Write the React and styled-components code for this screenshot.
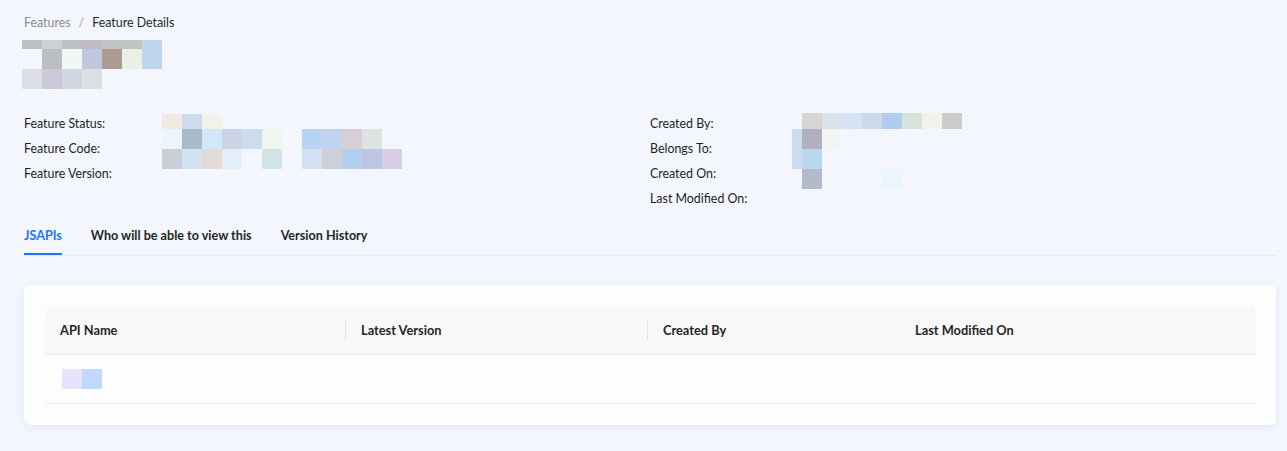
import React from 'react';
import styled, { createGlobalStyle } from 'styled-components';

const GlobalStyle = createGlobalStyle`
  body {
    margin: 0;
    background: #f3f6fd;
    font-family: Lato, "Noto Sans", Arial, sans-serif;
    color: #262626;
  }
`;

const Page = styled.div`
  padding: 13px 11px 24px 24px;
  min-height: 100vh;
  box-sizing: border-box;
`;

const Breadcrumb = styled.div`
  display: flex;
  align-items: center;
  gap: 8px;
  font-size: 12.4px;
  line-height: 20px;
`;

const Crumb = styled.span`
  color: ${p => (p.current ? '#262626' : '#8c8c8c')};
`;

const Sep = styled.span`
  color: #a6a6a6;
`;

const TitleMosaic = styled.svg`
  display: block;
  margin: 7px 0 0 -2px;
`;

const Info = styled.div`
  position: relative;
  display: grid;
  grid-template-columns: 626px 1fr;
  margin-top: 22px;
`;

const Column = styled.div`
  display: grid;
  grid-template-columns: ${p => p.labelWidth}px 1fr;
  grid-auto-rows: 25px;
  align-items: center;
  font-size: 12.4px;
`;

const Label = styled.div`
  color: #1f1f1f;
`;

const Value = styled.div``;

const Redaction = styled.svg`
  position: absolute;
  left: 0;
  top: 0;
  pointer-events: none;
`;

const Tabs = styled.div`
  display: flex;
  gap: 29px;
  border-bottom: 1px solid #e8eaef;
`;

const Tab = styled.div`
  position: relative;
  padding: 15px 0 9px;
  font-size: 12.6px;
  line-height: 20px;
  font-weight: 700;
  color: ${p => (p.active ? '#1677ff' : '#262626')};

  &::after {
    content: '';
    position: absolute;
    left: 0;
    right: 0;
    bottom: 0;
    height: 2px;
    background: ${p => (p.active ? '#1677ff' : 'transparent')};
  }
`;

const Card = styled.div`
  margin-top: 29px;
  background: #fdfdfd;
  border-radius: 6px;
  padding: 21px;
  box-shadow: 0 2px 8px rgba(40, 60, 120, 0.08);
`;

const Table = styled.div`
  display: grid;
  grid-template-columns: 300px 302px 252px 1fr;
`;

const HeadCell = styled.div`
  position: relative;
  height: 48px;
  display: flex;
  align-items: center;
  padding: 0 15px 0 16px;
  background: #f8f8f8;
  border-bottom: 1px solid #ebebeb;
  font-size: 12.8px;
  font-weight: 700;
  color: #262626;
  &:first-child { border-top-left-radius: 8px; padding-left: 15px; }
  &:last-child { border-top-right-radius: 8px; }

  &::before {
    content: '';
    display: ${p => (p.divider ? 'block' : 'none')};
    position: absolute;
    left: 0;
    top: 14px;
    bottom: 14px;
    width: 1px;
    background: #e6e6e6;
  }
`;

const BodyCell = styled.div`
  height: 48px;
  display: flex;
  align-items: center;
  padding: 0 16px;
  border-bottom: 1px solid #ebebeb;
`;

const NameMosaic = styled.svg`
  display: block;
  margin-left: 1px;
`;

const titleCells = [
  [0, 0, 20, 9, '#bdbfc2'], [20, 0, 20, 9, '#cdd0d6'], [40, 0, 20, 9, '#bec0c3'],
  [60, 0, 20, 9, '#c0bcc1'], [80, 0, 20, 9, '#c0c2c5'], [100, 0, 20, 9, '#c0c3c0'],
  [120, 0, 20, 29, '#bed5ec'],
  [20, 9, 20, 20, '#bcbfc2'], [40, 9, 20, 20, '#f2f6f6'], [60, 9, 20, 20, '#bfc8e0'],
  [80, 9, 20, 20, '#ad9b90'], [100, 9, 20, 20, '#e9f0e5'],
  [0, 29, 20, 20, '#dcdfe5'], [20, 29, 20, 20, '#cdc9d8'], [40, 29, 20, 20, '#cfd8e1'],
  [60, 29, 20, 20, '#dcdfe3'],
];

// page coordinates of the blurred values; shifted to the info block origin below
const infoCells = [
  [162, 114, 20, 15, '#f3e9e3'], [182, 114, 20, 15, '#ccdcec'], [202, 114, 20, 15, '#f4f1ea'],
  [162, 129, 20, 20, '#eaf6fc'], [182, 129, 20, 20, '#aabacb'], [202, 129, 20, 20, '#d0e8f9'],
  [222, 129, 20, 20, '#cbd5e6'], [242, 129, 20, 20, '#ccdcec'], [262, 129, 20, 20, '#eef6ef'],
  [302, 129, 20, 20, '#b8d4f4'], [322, 129, 20, 20, '#c0d4f2'], [342, 129, 20, 20, '#d8ced6'],
  [362, 129, 20, 20, '#dce4e2'],
  [162, 149, 20, 20, '#cbcdda'], [182, 149, 20, 20, '#d2e2f3'], [202, 149, 20, 20, '#e2d9d8'],
  [222, 149, 20, 20, '#e2effb'], [262, 149, 20, 20, '#d4e3e6'],
  [302, 149, 20, 20, '#d2e2f3'], [322, 149, 20, 20, '#cdd0d6'], [342, 149, 20, 20, '#b2cfee'],
  [362, 149, 20, 20, '#bdc6e2'], [382, 149, 20, 20, '#d8cfe4'],
  [802, 113, 20, 16, '#d4d6d6'], [822, 113, 20, 16, '#d7e3e8'], [842, 113, 20, 16, '#d4e2f4'],
  [862, 113, 20, 16, '#cbd9ea'], [882, 113, 20, 16, '#b0cdee'], [902, 113, 20, 16, '#d5e5dd'],
  [922, 113, 20, 16, '#f3f1eb'], [942, 113, 20, 16, '#cbcccc'],
  [792, 129, 10, 40, '#ccdcee'],
  [802, 129, 20, 20, '#b3afc2'], [822, 129, 20, 20, '#f2f5f3'],
  [802, 149, 20, 20, '#b8d8f0'],
  [802, 169, 20, 20, '#b3bacb'], [882, 169, 20, 20, '#eaf6fc'],
];

const left = ['Feature Status:', 'Feature Code:', 'Feature Version:'];
const right = ['Created By:', 'Belongs To:', 'Created On:', 'Last Modified On:'];
const columns = [
  { title: 'API Name' },
  { title: 'Latest Version', divider: true },
  { title: 'Created By', divider: true },
  { title: 'Last Modified On' },
];

export default function App() {
  return (
    <Page>
      <GlobalStyle />
      <Breadcrumb>
        <Crumb>Features</Crumb>
        <Sep>/</Sep>
        <Crumb current>Feature Details</Crumb>
      </Breadcrumb>

      <TitleMosaic width="140" height="49">
        {titleCells.map(([x, y, w, h, c], i) => (
          <rect key={i} x={x} y={y} width={w} height={h} fill={c} />
        ))}
      </TitleMosaic>

      <Info>
        <Column labelWidth={138}>
          {left.map(l => (
            <React.Fragment key={l}>
              <Label>{l}</Label>
              <Value />
            </React.Fragment>
          ))}
        </Column>
        <Column labelWidth={152}>
          {right.map(l => (
            <React.Fragment key={l}>
              <Label>{l}</Label>
              <Value />
            </React.Fragment>
          ))}
        </Column>
        <Redaction width="960" height="100">
          {infoCells.map(([x, y, w, h, c], i) => (
            <rect key={i} x={x - 24} y={y - 111} width={w} height={h} fill={c} />
          ))}
        </Redaction>
      </Info>

      <Tabs>
        <Tab active>JSAPIs</Tab>
        <Tab>Who will be able to view this</Tab>
        <Tab>Version History</Tab>
      </Tabs>

      <Card>
        <Table>
          {columns.map(c => (
            <HeadCell key={c.title} divider={c.divider}>{c.title}</HeadCell>
          ))}
          <BodyCell>
            <NameMosaic width="40" height="20">
              <rect x="0" y="0" width="20" height="20" fill="#e8e2fa" />
              <rect x="20" y="0" width="20" height="20" fill="#bfdafd" />
            </NameMosaic>
          </BodyCell>
          <BodyCell />
          <BodyCell />
          <BodyCell />
        </Table>
      </Card>
    </Page>
  );
}
